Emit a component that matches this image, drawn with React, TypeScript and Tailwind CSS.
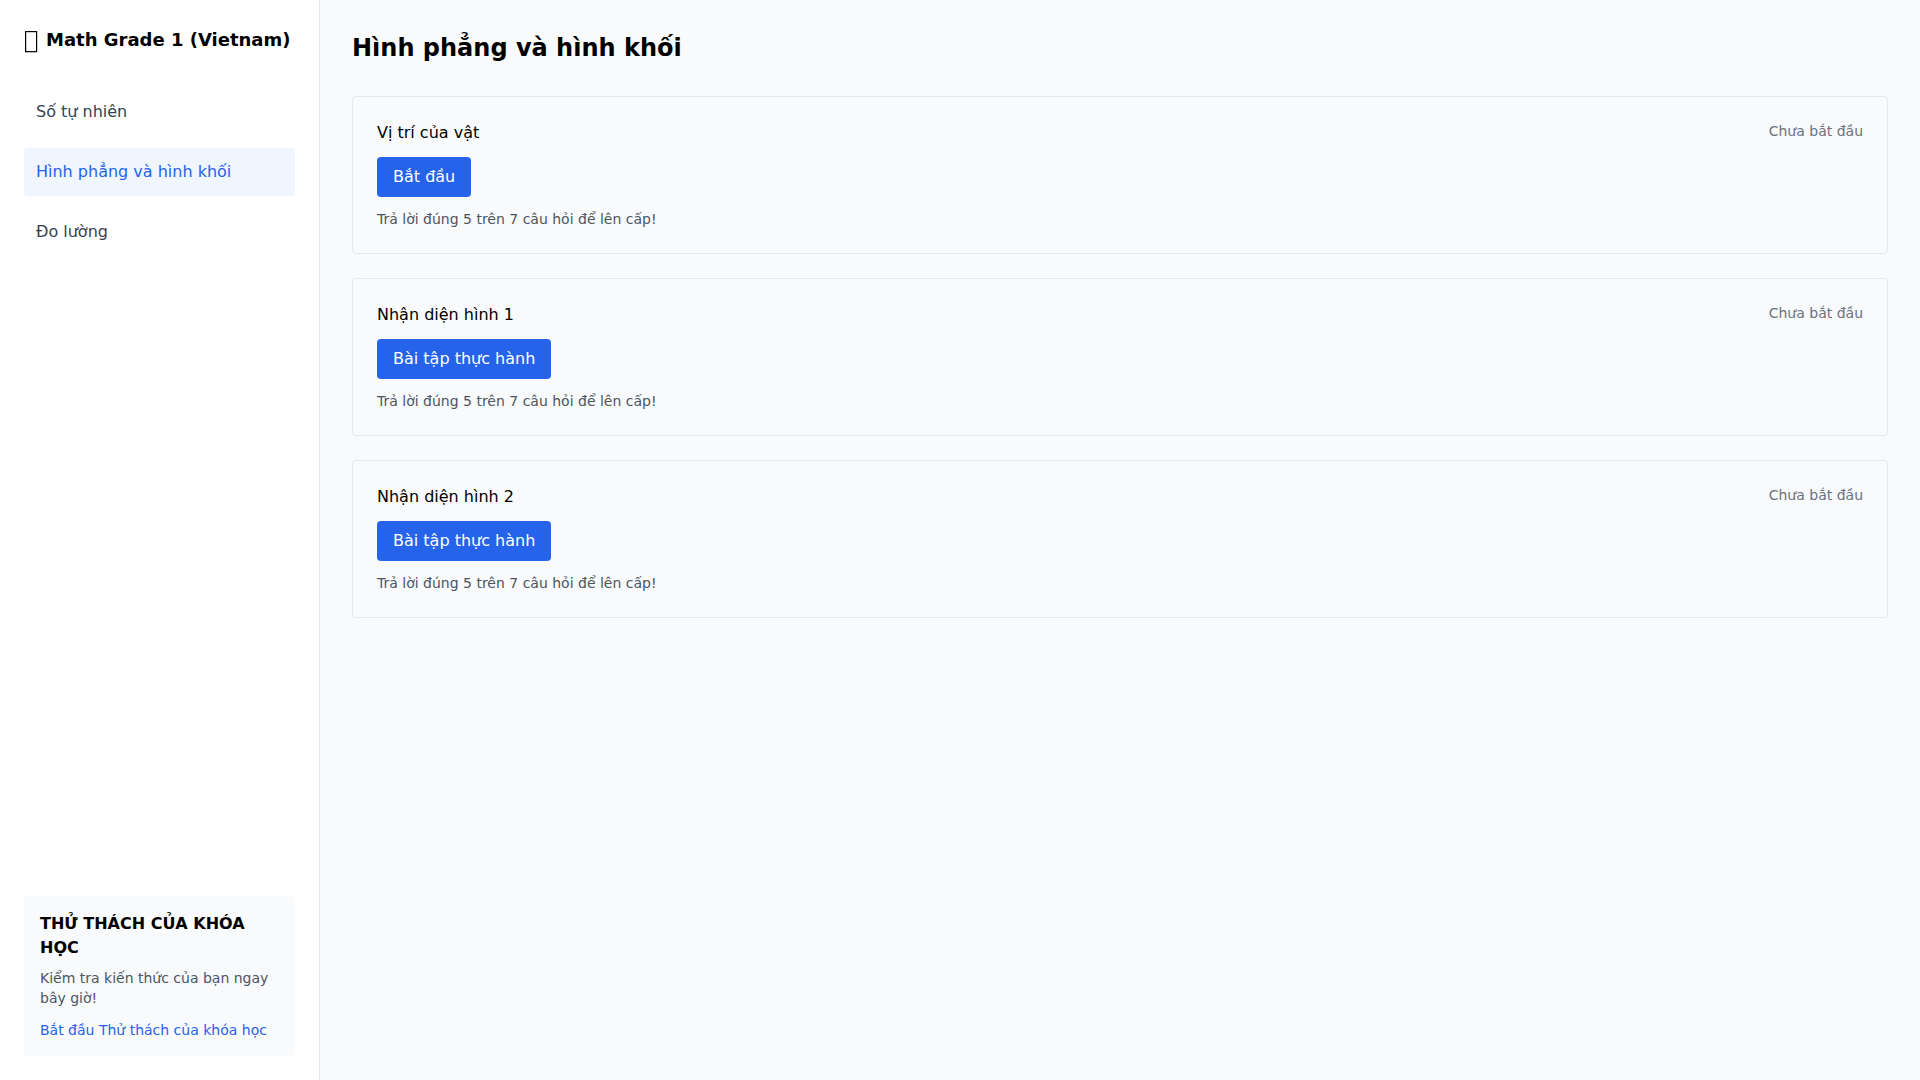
import { useState } from 'react';

interface Lesson {
    title: string;
    action: string;
}

const topics = ['Số tự nhiên', 'Hình phẳng và hình khối', 'Đo lường'];

const lessons: Lesson[] = [
    { title: 'Vị trí của vật', action: 'Bắt đầu' },
    { title: 'Nhận diện hình 1', action: 'Bài tập thực hành' },
    { title: 'Nhận diện hình 2', action: 'Bài tập thực hành' },
];

function LessonCard({ title, action }: Lesson) {
    return (
        <div className="flex items-start justify-between p-6 border border-[#e5e7eb] rounded">
            <div>
                <h3 className="mb-3">{title}</h3>
                <button className="px-4 py-2 bg-[#2563eb] hover:bg-[#1d4ed8] text-white rounded">
                    {action}
                </button>
                <p className="mt-3 text-sm text-[#4b5563]">Trả lời đúng 5 trên 7 câu hỏi để lên cấp!</p>
            </div>
            <span className="text-sm text-[#6b7280]">Chưa bắt đầu</span>
        </div>
    );
}

export default function App() {
    const [selected, setSelected] = useState(1);

    return (
        <div className="flex min-h-screen bg-[#f9fafb] text-black font-['DejaVu_Sans',sans-serif]">
            {/* Sidebar */}
            <aside className="flex flex-col w-80 shrink-0 p-6 bg-white border-r border-[#e5e7eb]">
                <div className="flex items-center gap-2 mb-8">
                    <svg className="w-[14px] h-8 shrink-0" viewBox="0 0 14 32" fill="none" stroke="currentColor" strokeWidth="1.2" aria-hidden="true">
                        <rect x="1.6" y="7.6" width="11" height="20.1" />
                    </svg>
                    <h1 className="text-lg font-bold whitespace-nowrap">Math Grade 1 (Vietnam)</h1>
                </div>

                <nav className="flex flex-col gap-3">
                    {topics.map((topic, idx) => (
                        <button
                            key={topic}
                            onClick={() => setSelected(idx)}
                            className={`p-3 text-left rounded ${selected === idx
                                ? 'bg-[#eff6ff] text-[#2563eb]'
                                : 'text-[#374151] hover:bg-[#f9fafb]'
                                }`}
                        >
                            {topic}
                        </button>
                    ))}
                </nav>

                {/* Course challenge */}
                <div className="mt-auto p-4 bg-[#f9fafb] rounded">
                    <h2 className="mb-2 font-bold">THỬ THÁCH CỦA KHÓA HỌC</h2>
                    <p className="mb-3 text-sm text-[#4b5563]">Kiểm tra kiến thức của bạn ngay bây giờ!</p>
                    <a href="#challenge" className="block text-sm text-[#2563eb] hover:underline">
                        Bắt đầu Thử thách của khóa học
                    </a>
                </div>
            </aside>

            {/* Lessons */}
            <main className="flex-1 p-8">
                <h2 className="mb-8 text-2xl font-bold">{topics[selected]}</h2>
                <div className="flex flex-col gap-6">
                    {lessons.map((lesson) => (
                        <LessonCard key={lesson.title} {...lesson} />
                    ))}
                </div>
            </main>
        </div>
    );
}
